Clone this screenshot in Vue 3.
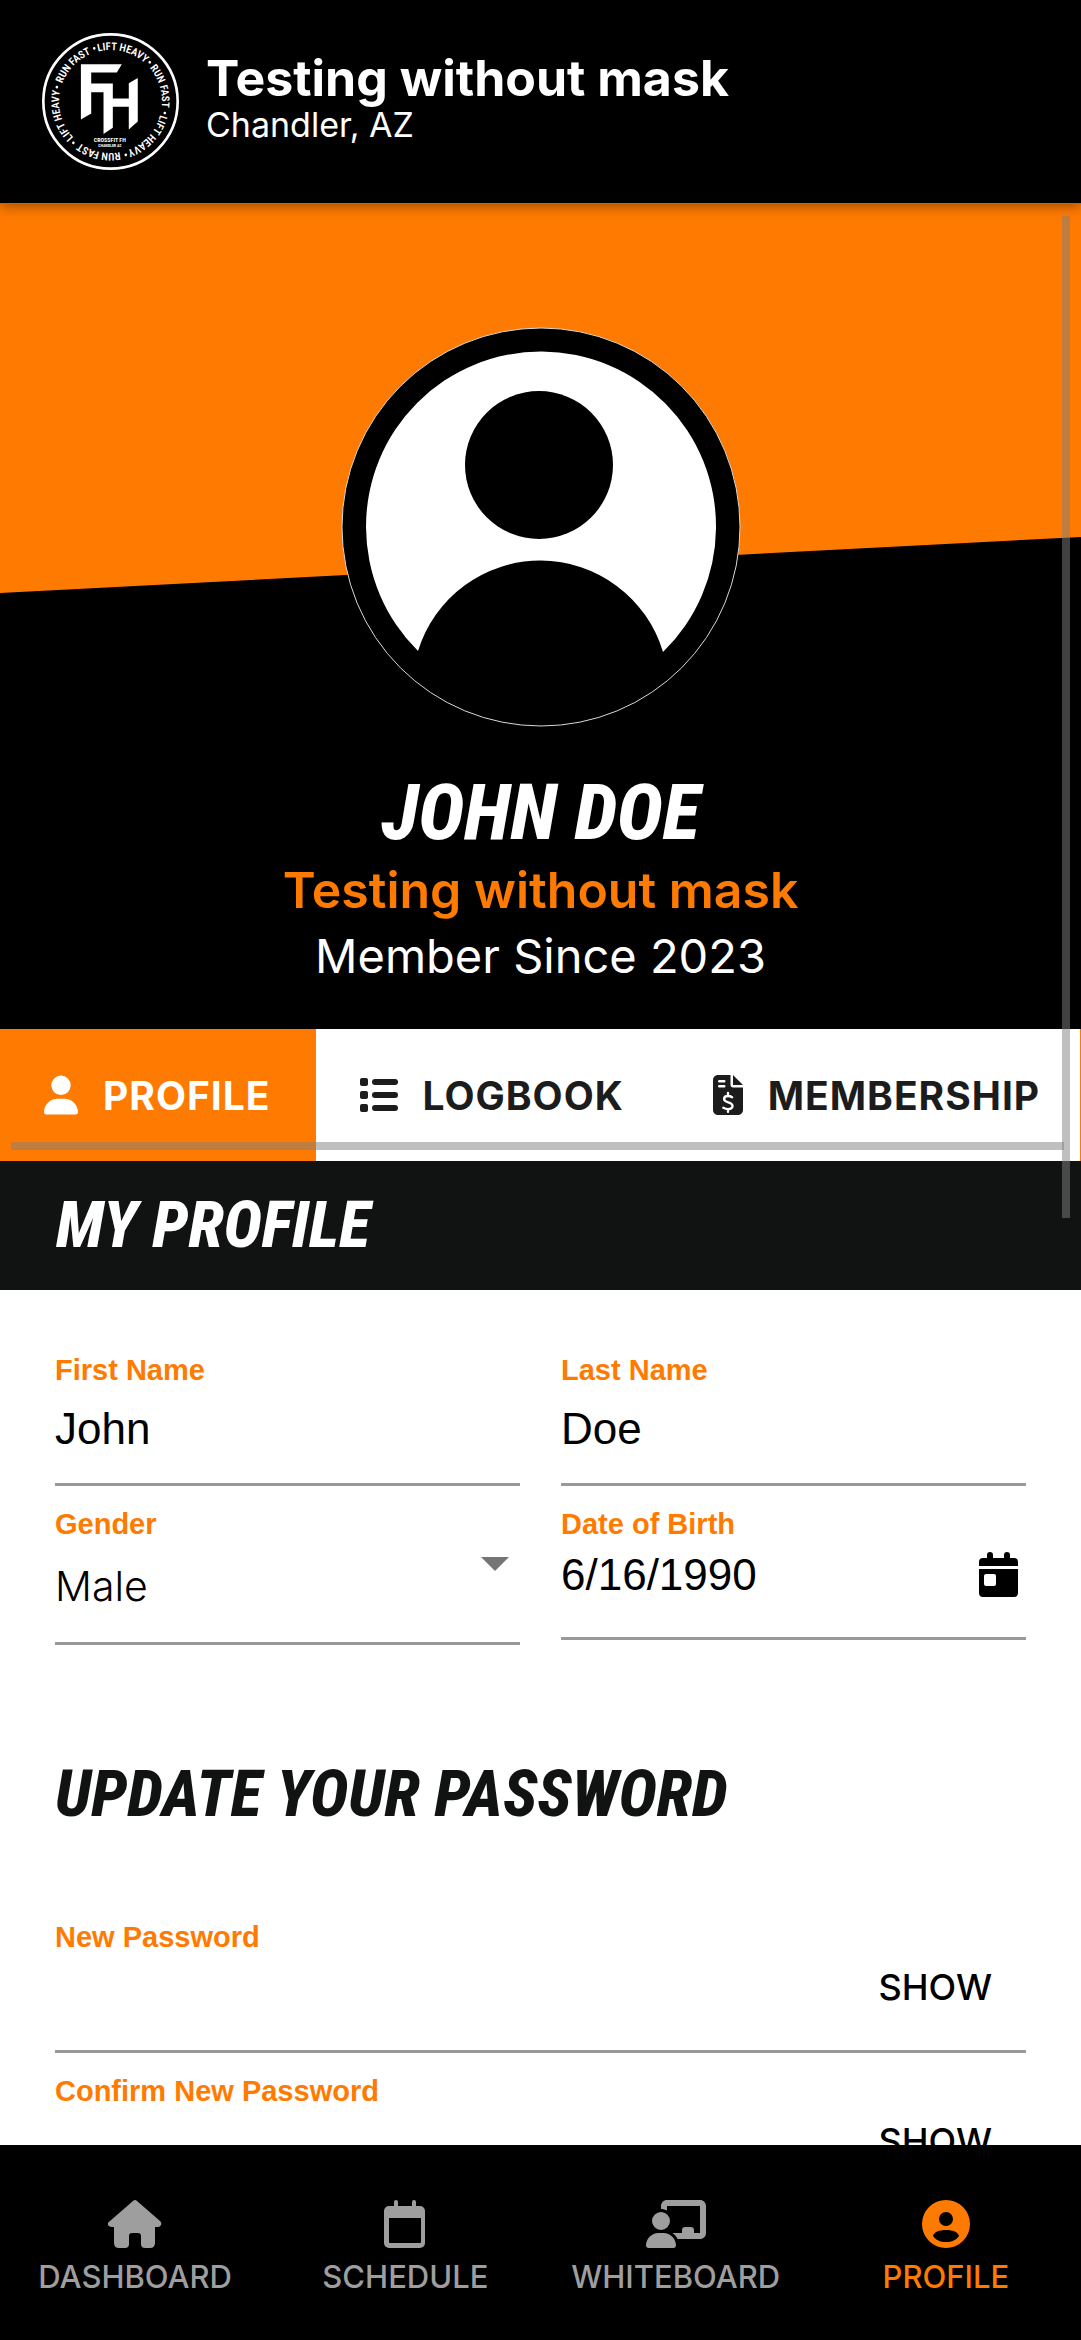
<script setup>
import { ref } from 'vue'

const firstName = ref('John')
const lastName = ref('Doe')
const gender = ref('Male')
const birthDate = ref('6/16/1990')
const newPassword = ref('')
const confirmPassword = ref('')
const showNew = ref(false)
const showConfirm = ref(false)

const ring = [
  { text: 'LIFT HEAVY', angle: 14 },
  { text: 'RUN FAST', angle: 73 },
  { text: 'LIFT HEAVY', angle: 133 },
  { text: 'RUN FAST', angle: 193 },
  { text: 'LIFT HEAVY', angle: 254 },
  { text: 'RUN FAST', angle: 314 }
]
const dots = [45, 102, 164, 222, 285, 343]
</script>

<template>
  <div class="app">
    <header class="header">
      <svg class="logo" viewBox="0 0 412 412" aria-label="CrossFit FH">
        <defs>
          <path id="ring-arc" d="M206 361 A155 155 0 0 1 206 51 A155 155 0 0 1 206 361" />
        </defs>
        <circle cx="206" cy="206" r="202" fill="#000" stroke="#fff" stroke-width="8" />
        <g fill="#fff">
          <text
            v-for="item in ring"
            :key="item.angle"
            class="ring-text"
            :transform="`rotate(${item.angle} 206 206)`"
          >
            <textPath href="#ring-arc" startOffset="50%" text-anchor="middle">{{ item.text }}</textPath>
          </text>
          <circle
            v-for="angle in dots"
            :key="angle"
            cx="206"
            cy="39"
            r="4"
            :transform="`rotate(${angle} 206 206)`"
          />
          <path d="M117 94H240L225 119H148V152H213V197H261V151L288 135V266L261 290V222H213V285L185 304V178H148V242L117 260Z" />
          <text class="logo-name" x="204" y="327" text-anchor="middle">CROSSFIT FH</text>
          <text class="logo-city" x="204" y="343" text-anchor="middle">CHANDLER AZ</text>
        </g>
      </svg>
      <div class="gym">
        <h1 class="gym-name">Testing without mask</h1>
        <p class="gym-city">Chandler, AZ</p>
      </div>
    </header>

    <main class="content">
      <section class="banner">
        <svg class="avatar" viewBox="0 0 400 400" aria-label="Avatar">
          <circle cx="200" cy="200" r="199" fill="#000" stroke="#d8d8d8" stroke-width="1" />
          <path d="M77 324A175 175 0 1 1 322 325A128 128 0 0 0 77 324Z" fill="#fff" />
          <circle cx="198" cy="138" r="74" fill="#000" />
        </svg>
        <h2 class="display member-name">JOHN DOE</h2>
        <p class="member-gym">Testing without mask</p>
        <p class="member-since">Member Since 2023</p>
      </section>

      <nav class="tabs">
        <button type="button" class="tab active">
          <svg width="34" height="40" viewBox="0 0 448 512" fill="currentColor">
            <path d="M224 256a128 128 0 1 0 0-256 128 128 0 0 0 0 256zm-46 48C80 304 0 384 0 482c0 17 13 30 30 30h388c17 0 30-13 30-30 0-98-80-178-178-178z" />
          </svg>
          PROFILE
        </button>
        <button type="button" class="tab">
          <svg width="38" height="34" viewBox="0 0 38 34" fill="currentColor">
            <rect x="0" y="0" width="8" height="8" rx="2" />
            <rect x="0" y="13" width="8" height="8" rx="2" />
            <rect x="0" y="26" width="8" height="8" rx="2" />
            <rect x="12" y="1" width="26" height="6" rx="3" />
            <rect x="12" y="14" width="26" height="6" rx="3" />
            <rect x="12" y="27" width="26" height="6" rx="3" />
          </svg>
          LOGBOOK
        </button>
        <button type="button" class="tab">
          <svg width="30" height="40" viewBox="0 0 384 512" fill="currentColor">
            <path d="M64 0C29 0 0 29 0 64v384c0 35 29 64 64 64h256c35 0 64-29 64-64V160H256c-18 0-32-14-32-32V0zm192 0v128h128zM80 64h64a16 16 0 0 1 0 32H80a16 16 0 0 1 0-32zm0 64h64a16 16 0 0 1 0 32H80a16 16 0 0 1 0-32z" />
            <path d="M245 284c-15-9-34-15-53-15-30 0-50 14-50 38 0 56 108 28 108 88 0 27-22 42-56 42-24 0-44-7-62-17M192 230v40M192 436v34" fill="none" stroke="#fff" stroke-width="30" stroke-linecap="round" />
          </svg>
          MEMBERSHIP
        </button>
        <span class="tab-next"></span>
        <span class="scrollbar-x"></span>
      </nav>

      <h2 class="display section-bar">MY PROFILE</h2>

      <form class="form" @submit.prevent>
        <div class="grid">
          <div class="field">
            <label for="first-name">First Name</label>
            <div class="control">
              <input id="first-name" v-model="firstName" type="text" />
            </div>
          </div>
          <div class="field">
            <label for="last-name">Last Name</label>
            <div class="control">
              <input id="last-name" v-model="lastName" type="text" />
            </div>
          </div>
          <div class="field">
            <label for="gender">Gender</label>
            <div class="control select">
              <select id="gender" v-model="gender">
                <option>Male</option>
                <option>Female</option>
              </select>
              <svg class="arrow" width="28" height="14" viewBox="0 0 28 14"><path d="M0 0H28L14 14Z" fill="#757575" /></svg>
            </div>
          </div>
          <div class="field">
            <label for="birth-date">Date of Birth</label>
            <div class="control date">
              <input id="birth-date" v-model="birthDate" type="text" />
              <button type="button" class="icon-button" aria-label="Pick a date">
                <svg width="40" height="46" viewBox="0 0 40 46">
                  <path d="M5 6H8V3a3 3 0 0 1 6 0V6H25V3a3 3 0 0 1 6 0V6H35a4 4 0 0 1 4 4V14H0V10a4 4 0 0 1 4-4ZM0 17H39V41a4 4 0 0 1-4 4H4a4 4 0 0 1-4-4ZM7 22a2 2 0 0 0-2 2V32a2 2 0 0 0 2 2H15a2 2 0 0 0 2-2V24a2 2 0 0 0-2-2Z" fill-rule="evenodd" />
                </svg>
              </button>
            </div>
          </div>
        </div>

        <h2 class="display password-title">UPDATE YOUR PASSWORD</h2>

        <div class="stack">
          <div class="field">
            <label for="new-password">New Password</label>
            <div class="control">
              <input id="new-password" v-model="newPassword" :type="showNew ? 'text' : 'password'" />
              <button type="button" class="show" @click="showNew = !showNew">SHOW</button>
            </div>
          </div>
          <div class="field">
            <label for="confirm-password">Confirm New Password</label>
            <div class="control">
              <input id="confirm-password" v-model="confirmPassword" :type="showConfirm ? 'text' : 'password'" />
              <button type="button" class="show" @click="showConfirm = !showConfirm">SHOW</button>
            </div>
          </div>
        </div>
      </form>
      <span class="scrollbar-y"></span>
    </main>

    <nav class="bottom-nav">
      <a href="#dashboard" class="nav-item">
        <svg width="54" height="48" viewBox="0 0 54 48" fill="currentColor">
          <path d="M25 1Q27 -1 29 1L52 21Q54 23 53 25T50 27H47V43Q47 48 42 48H37Q33 48 33 44V36Q33 33 30 33H24Q21 33 21 36V44Q21 48 17 48H11Q6 48 6 43V27H4Q1 27 0 25T2 21Z" />
        </svg>
        DASHBOARD
      </a>
      <a href="#schedule" class="nav-item">
        <svg width="42" height="48" viewBox="0 0 42 48" fill="currentColor" fill-rule="evenodd">
          <path d="M5 6H10V2a2 2 0 0 1 4 0V6H28V2a2 2 0 0 1 4 0V6H36a5 5 0 0 1 5 5V43a5 5 0 0 1-5 5H5a5 5 0 0 1-5-5V11a5 5 0 0 1 5-5ZM5 18V42a1 1 0 0 0 1 1H36a1 1 0 0 0 1-1V18Z" />
        </svg>
        SCHEDULE
      </a>
      <a href="#whiteboard" class="nav-item">
        <svg width="60" height="48" viewBox="0 0 640 512" fill="currentColor">
          <path d="M160 64c0-35 29-64 64-64h352c36 0 64 29 64 65v286c0 36-28 65-64 65H337c-12-26-31-48-55-64h102v-32c0-18 14-32 32-32h64c18 0 32 14 32 32v32h64V64H224v49c-19-11-41-17-64-17zm0 64a96 96 0 1 1 0 192 96 96 0 0 1 0-192zm-27 224h54c73 0 133 60 133 133 0 15-12 27-27 27H27c-15 0-27-12-27-27 0-73 60-133 133-133z" />
        </svg>
        WHITEBOARD
      </a>
      <a href="#profile" class="nav-item current">
        <svg width="48" height="48" viewBox="0 0 48 48" fill="currentColor" fill-rule="evenodd">
          <path d="M24 0a24 24 0 1 1 0 48 24 24 0 0 1 0-48ZM24 12a7 7 0 1 0 0 14 7 7 0 0 0 0-14ZM11 36c3 4 7 6 13 6s10-2 13-6c-1-4-6-6-13-6s-12 2-13 6Z" />
        </svg>
        PROFILE
      </a>
    </nav>
  </div>
</template>

<style>
body {
  margin: 0;
  background: #fff;
}
</style>

<style scoped>
.app {
  --orange: #ff7a00;
  --ink: #111312;
  display: flex;
  flex-direction: column;
  height: 100vh;
  font-family: Inter, 'Liberation Sans', sans-serif;
  color: #000;
}

h1,
h2,
p {
  margin: 0;
}

button {
  padding: 0;
  border: 0;
  background: none;
  font-family: inherit;
  color: inherit;
}

.display {
  font-family: 'Roboto Condensed', Roboto, sans-serif;
  font-weight: 800;
  font-style: italic;
}

.header {
  position: relative;
  z-index: 1;
  display: flex;
  align-items: center;
  gap: 27px;
  flex: none;
  min-height: 204px;
  padding: 0 42px;
  box-sizing: border-box;
  background: #000;
  color: #fff;
  border-bottom: 1px solid #777;
  box-shadow: 0 2px 12px rgba(0, 0, 0, 0.4);
}

.logo {
  width: 137px;
  height: 137px;
}

.ring-text {
  font: 600 32px 'Roboto Condensed', Roboto, sans-serif;
}

.logo-name {
  font: 700 18px 'Roboto Condensed', Roboto, sans-serif;
}

.logo-city {
  font: 700 12px 'Roboto Condensed', Roboto, sans-serif;
}

.gym {
  padding-bottom: 8px;
}

.gym-name {
  font-size: 50px;
  line-height: 54px;
  font-weight: 700;
}

.gym-city {
  font-size: 34px;
  line-height: 40px;
  font-weight: 400;
}

.content {
  position: relative;
  flex: 1;
  min-height: 0;
  overflow: hidden;
}

.banner {
  position: relative;
  display: flex;
  flex-direction: column;
  align-items: center;
  padding: 123px 0 40px;
  background: #000;
  color: #fff;
}

.banner::before {
  content: '';
  position: absolute;
  inset: 0;
  background: var(--orange);
  clip-path: polygon(0 0, 100% 0, 100% 333px, 0 389px);
}

.avatar {
  position: relative;
  width: 400px;
  height: 400px;
}

.member-name {
  margin-top: 42px;
  font-size: 78px;
  line-height: 88px;
}

.member-gym {
  font-size: 50px;
  line-height: 66px;
  font-weight: 600;
  color: var(--orange);
}

.member-since {
  font-size: 47px;
  line-height: 66px;
  font-weight: 400;
}

.tabs {
  position: relative;
  display: flex;
  height: 132px;
  overflow: hidden;
}

.tab {
  display: flex;
  flex: none;
  align-items: center;
  gap: 25px;
  padding: 0 45px 0 44px;
  font-size: 39px;
  font-weight: 700;
  letter-spacing: 1px;
  color: #1c1c1c;
}

.tab.active {
  background: var(--orange);
  color: #fff;
}

.tab-next {
  position: absolute;
  top: 0;
  right: 0;
  width: 1px;
  height: 100%;
  background: var(--orange);
}

.scrollbar-x,
.scrollbar-y {
  position: absolute;
  background: rgba(128, 128, 128, 0.5);
}

.scrollbar-x {
  left: 11px;
  right: 17px;
  bottom: 11px;
  height: 8px;
}

.scrollbar-y {
  top: 12px;
  right: 11px;
  width: 8px;
  height: 1002px;
}

.section-bar {
  padding: 0 56px;
  font-size: 65px;
  line-height: 129px;
  background: var(--ink);
  color: #fff;
}

.form {
  padding: 63px 55px;
}

.grid {
  display: grid;
  grid-template-columns: repeat(2, minmax(0, 1fr));
  align-items: start;
  gap: 21px 41px;
}

.stack {
  display: flex;
  flex-direction: column;
  gap: 21px;
}

.field {
  display: flex;
  flex-direction: column;
  border-bottom: 3px solid #999;
}

.field label {
  font: 700 29px/34px 'Liberation Sans', Arial, sans-serif;
  color: var(--orange);
}

.control {
  display: flex;
  align-items: center;
  height: 96px;
  padding-bottom: 12px;
  box-sizing: border-box;
}

.control.date {
  padding-bottom: 28px;
}

.control.select {
  position: relative;
  height: 101px;
  padding-bottom: 12px;
}

.control input {
  flex: 1;
  min-width: 0;
  height: 50px;
  padding: 0;
  border: 0;
  outline: 0;
  background: none;
  font: 44px/50px 'Liberation Sans', Arial, sans-serif;
  color: #000;
}

.control select {
  flex: 1;
  padding: 0;
  border: 0;
  appearance: none;
  background: none;
  font: 300 41px/50px Inter, sans-serif;
  color: #000;
}

.arrow {
  position: absolute;
  top: 16px;
  right: 11px;
  pointer-events: none;
}

.icon-button {
  display: flex;
  margin-right: 7px;
}

.show {
  margin: 0 34px 18px 0;
  font-size: 36px;
  font-weight: 500;
}

.password-title {
  margin: 107px 0 84px;
  font-size: 65px;
  line-height: 84px;
  color: var(--ink);
}

.bottom-nav {
  display: grid;
  grid-template-columns: repeat(4, 1fr);
  flex: none;
  height: 195px;
  background: #000;
}

.nav-item {
  display: flex;
  flex-direction: column;
  align-items: center;
  gap: 11px;
  padding-top: 55px;
  font-size: 31px;
  line-height: 36px;
  font-weight: 500;
  text-decoration: none;
  color: #9e9e9e;
}

.nav-item.current {
  color: var(--orange);
}
</style>
